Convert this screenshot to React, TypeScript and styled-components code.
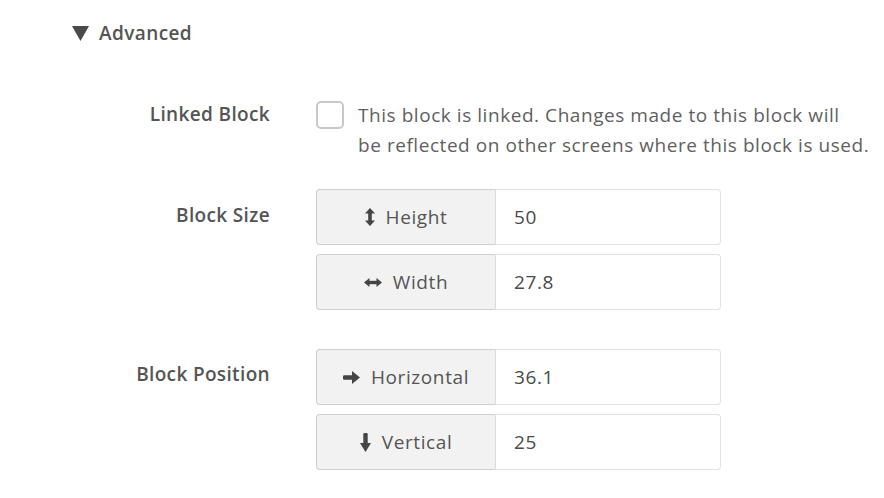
import { createGlobalStyle } from "styled-components";
import styled from "styled-components";
import type { ReactNode } from "react";

const GlobalStyle = createGlobalStyle`
  html, body {
    margin: 0;
    padding: 0;
    background: #ffffff;
  }
  body {
    font-family: "Open Sans", "Noto Sans", sans-serif;
    color: #555555;
  }
`;

const Panel = styled.div`
  width: 884px;
  height: 498px;
  padding: 20px 0 0 72px;
  box-sizing: border-box;
`;

const SectionHead = styled.div`
  display: flex;
  align-items: center;
  gap: 10px;
  height: 26px;
  font-size: 19px;
  font-weight: 600;
  letter-spacing: 0.4px;
  color: #555555;
  svg {
    width: 17px;
    height: 15px;
  }
`;

const Form = styled.div`
  margin-top: 55px;
  margin-left: -72px;
  display: flex;
  flex-direction: column;
`;

type RowProps = { $gap: number };

const Row = styled.div<RowProps>`
  display: grid;
  grid-template-columns: 270px 405px;
  column-gap: 46px;
  margin-bottom: ${(p) => p.$gap}px;
`;

type LabelProps = { $top: number };

const Label = styled.div<LabelProps>`
  text-align: right;
  font-size: 19px;
  font-weight: 600;
  letter-spacing: 0.35px;
  color: #555555;
  padding-top: ${(p) => p.$top}px;
  line-height: 26px;
  white-space: nowrap;
`;

const CheckLine = styled.label`
  display: flex;
  align-items: flex-start;
  gap: 14px;
  width: 560px;
`;

const Box = styled.span`
  flex: none;
  width: 28px;
  height: 28px;
  box-sizing: border-box;
  border: 2px solid #c8c8c8;
  border-radius: 5px;
  background: #fff;
`;

const Note = styled.span`
  font-size: 19px;
  letter-spacing: 0.55px;
  line-height: 30px;
  color: #5f5f5f;
  margin-top: -1px;
  white-space: nowrap;
`;

const Stack = styled.div`
  display: flex;
  flex-direction: column;
  gap: 9px;
`;

const Group = styled.div`
  display: flex;
  height: 56px;
`;

const Addon = styled.div`
  flex: none;
  width: 180px;
  box-sizing: border-box;
  display: flex;
  align-items: center;
  justify-content: center;
  gap: 11px;
  background: #f2f2f2;
  border: 1px solid #cfcfcf;
  border-right: 1px solid #dcdcdc;
  border-radius: 4px 0 0 4px;
  font-size: 19px;
  letter-spacing: 0.6px;
  color: #555555;
  svg {
    fill: #454545;
    flex: none;
  }
`;

const Value = styled.div`
  flex: 1;
  box-sizing: border-box;
  display: flex;
  align-items: center;
  padding-left: 18px;
  border: 1px solid #e2e2e2;
  border-left: none;
  border-radius: 0 4px 4px 0;
  font-size: 19px;
  letter-spacing: 0.6px;
  color: #4a4a4a;
`;

const ArrowV = () => (
  <svg width="10" height="18" viewBox="0 0 10 18">
    <polygon points="5,0 10,5.5 0,5.5" />
    <rect x="3.2" y="5" width="3.6" height="8" />
    <polygon points="0,12.5 10,12.5 5,18" />
  </svg>
);

const ArrowH = () => (
  <svg width="18" height="9" viewBox="0 0 18 9">
    <polygon points="0,4.5 5.5,0 5.5,9" />
    <rect x="5" y="2.8" width="8" height="3.4" />
    <polygon points="12.5,0 18,4.5 12.5,9" />
  </svg>
);

const ArrowRight = () => (
  <svg width="17" height="13" viewBox="0 0 17 13">
    <rect x="0" y="4.3" width="11" height="4.4" rx="1.2" />
    <polygon points="9,0 17,6.5 9,13" />
  </svg>
);

const ArrowDown = () => (
  <svg width="11" height="19" viewBox="0 0 11 19">
    <rect x="3.3" y="0" width="4.4" height="12" rx="1.2" />
    <polygon points="0,10 11,10 5.5,19" />
  </svg>
);

type FieldProps = { icon: ReactNode; name: string; value: string };

const Field = ({ icon, name, value }: FieldProps) => (
  <Group>
    <Addon>
      {icon}
      <span>{name}</span>
    </Addon>
    <Value>{value}</Value>
  </Group>
);

export default function App() {
  return (
    <>
      <GlobalStyle />
      <Panel>
        <SectionHead>
          <svg viewBox="0 0 17 15">
            <polygon points="0,0 17,0 8.5,15" fill="#4a4a4a" />
          </svg>
          Advanced
        </SectionHead>
        <Form>
          <Row $gap={29}>
            <Label $top={0}>Linked Block</Label>
            <CheckLine>
              <Box />
              <Note>
                This block is linked. Changes made to this block will
                <br />
                be reflected on other screens where this block is used.
              </Note>
            </CheckLine>
          </Row>
          <Row $gap={39}>
            <Label $top={13}>Block Size</Label>
            <Stack>
              <Field icon={<ArrowV />} name="Height" value="50" />
              <Field icon={<ArrowH />} name="Width" value="27.8" />
            </Stack>
          </Row>
          <Row $gap={0}>
            <Label $top={12}>Block Position</Label>
            <Stack>
              <Field icon={<ArrowRight />} name="Horizontal" value="36.1" />
              <Field icon={<ArrowDown />} name="Vertical" value="25" />
            </Stack>
          </Row>
        </Form>
      </Panel>
    </>
  );
}
